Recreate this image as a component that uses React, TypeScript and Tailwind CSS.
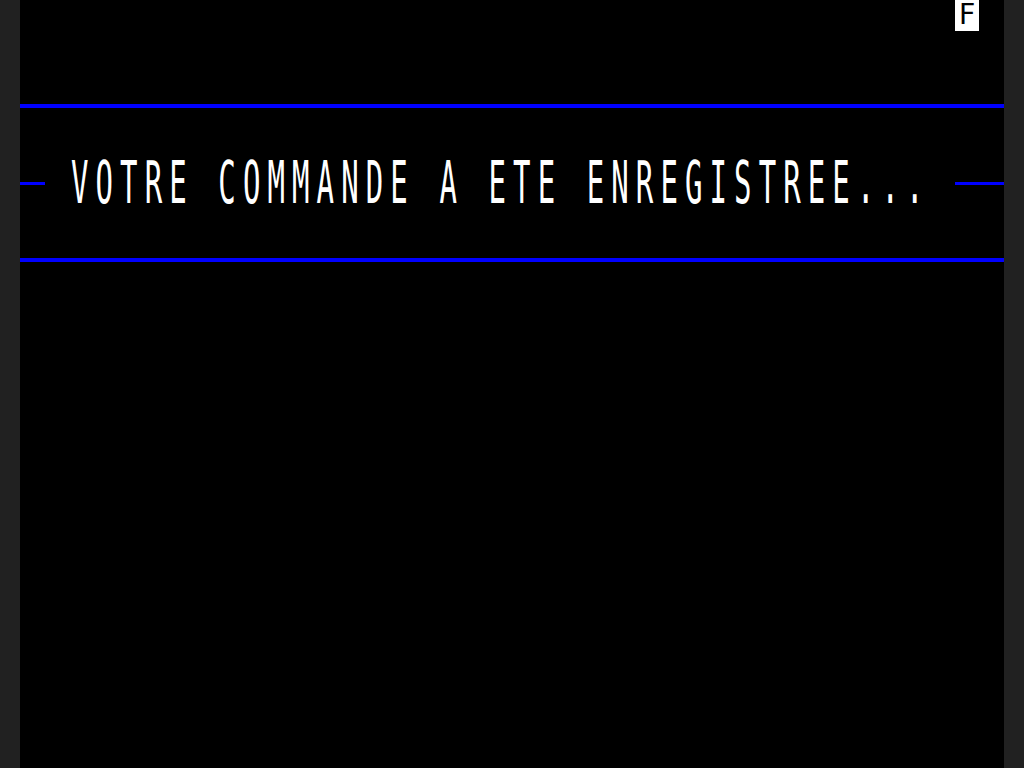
export default function App() {
  return (
    <div className="flex h-[768px] w-[1024px] bg-[#212121]">
      <div className="w-[20px]" />
      <main className="flex w-[984px] flex-col bg-black font-['DejaVu_Sans_Mono',monospace] text-white">
        <div className="flex h-[31px] justify-end pr-[25px]">
          <div className="h-[31px] w-[24px] bg-white text-center text-[28px] leading-[30px] text-black">
            F
          </div>
        </div>
        <div className="h-[73px]" />
        <div className="h-[4px] bg-[#0000ff]" />
        <div className="flex h-[150px] items-center justify-between">
          <div className="h-[3px] w-[25px] bg-[#0000ff]" />
          <p className="ml-[26px] mr-auto scale-y-[2] text-[29px] leading-none tracking-[7.1px]">
            VOTRE COMMANDE A ETE ENREGISTREE...
          </p>
          <div className="h-[3px] w-[49px] bg-[#0000ff]" />
        </div>
        <div className="h-[4px] bg-[#0000ff]" />
      </main>
      <div className="w-[20px]" />
    </div>
  );
}
